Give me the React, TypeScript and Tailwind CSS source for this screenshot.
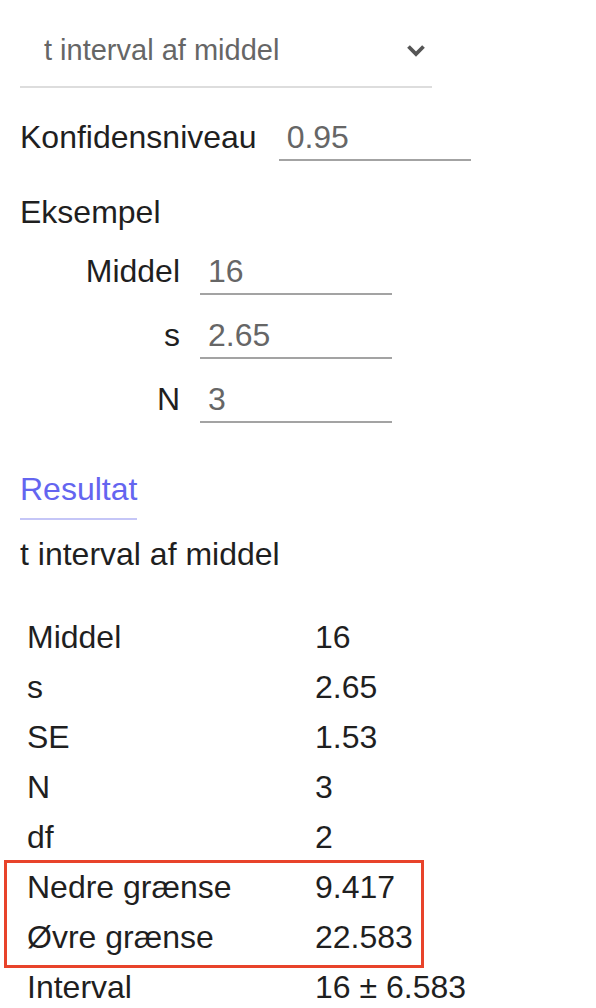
import React from "react";

const font = { fontFamily: '"Liberation Sans", Arial, Helvetica, sans-serif' };

function Field({ label, value }: { label: string; value: string }) {
  return (
    <div className="flex items-start">
      <div className="w-[160px] text-right text-[32px] leading-[32px] text-[#1f1f1f]">{label}</div>
      <div className="ml-[20px] w-[192px] border-b-2 border-[#a3a3a3] pl-[8px] pb-[6px] text-[32px] leading-[32px] text-[#666666]">
        {value}
      </div>
    </div>
  );
}

const rows: [string, string][] = [
  ["Middel", "16"],
  ["s", "2.65"],
  ["SE", "1.53"],
  ["N", "3"],
  ["df", "2"],
  ["Nedre grænse", "9.417"],
  ["Øvre grænse", "22.583"],
  ["Interval", "16 ± 6.583"],
];

export default function App() {
  return (
    <div className="min-h-[1008px] w-[596px] overflow-hidden bg-white px-[20px]" style={font}>
      {/* select */}
      <div className="flex w-[412px] items-center justify-between border-b-2 border-[#dddddd] pt-[36px] pb-[22px] pr-[6px] pl-[24px]">
        <span className="text-[29px] leading-[28px] text-[#666666]">t interval af middel</span>
        <svg width="20" height="13" viewBox="0 0 20 13">
          <polyline points="2.5,2.5 10,10 17.5,2.5" fill="none" stroke="#555555" strokeWidth="3.8" />
        </svg>
      </div>

      {/* confidence */}
      <div className="mt-[33px] flex items-start">
        <div className="mr-[22px] text-[32px] leading-[32px] text-[#1f1f1f]">Konfidensniveau</div>
        <div className="w-[192px] border-b-2 border-[#a3a3a3] pl-[8px] pb-[6px] text-[32px] leading-[32px] text-[#666666]">
          0.95
        </div>
      </div>

      <div className="mt-[35px] text-[32px] leading-[32px] text-[#1f1f1f]">Eksempel</div>

      <div className="mt-[27px] flex flex-col gap-[24px]">
        <Field label="Middel" value="16" />
        <Field label="s" value="2.65" />
        <Field label="N" value="3" />
      </div>

      <div className="mt-[50px]">
        <span className="inline-block border-b-2 border-[#c5c6f7] pb-[13px] text-[32px] leading-[32px] text-[#6465f0]">
          Resultat
        </span>
      </div>

      <div className="mt-[18px] text-[32px] leading-[32px] text-[#1f1f1f]">t interval af middel</div>

      <div className="relative mt-[42px]">
        <div className="ml-[7px] grid grid-cols-[288px_auto]">
          {rows.map(([k, v]) => (
            <React.Fragment key={k}>
              <div className="text-[32px] leading-[50px] text-[#1f1f1f]">{k}</div>
              <div className="whitespace-nowrap text-[32px] leading-[50px] text-[#1f1f1f]">{v}</div>
            </React.Fragment>
          ))}
        </div>
        <div className="pointer-events-none absolute left-[-16px] top-[248px] h-[108px] w-[420px] border-[3px] border-[#e8432a]" />
      </div>
    </div>
  );
}
